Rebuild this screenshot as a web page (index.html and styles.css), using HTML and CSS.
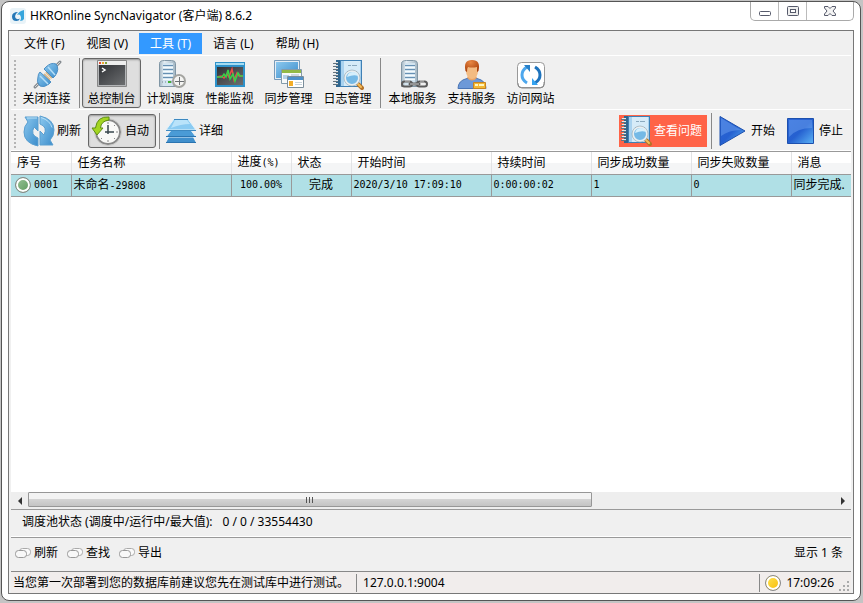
FILE: index.html
```html
<!DOCTYPE html>
<html lang="zh-CN">

<head>
    <meta charset="UTF-8">
    <meta name="viewport" content="width=device-width, initial-scale=1.0">
    <title>HKROnline SyncNavigator</title>
    <link rel="stylesheet" href="styles.css">
</head>

<body>
    <!-- shared gradients and icons -->
    <svg class="defs" width="0" height="0" aria-hidden="true">
        <defs>
            <linearGradient id="blue" x1="0" y1="0" x2="1" y2="1">
                <stop offset="0" stop-color="#8cc8ee" />
                <stop offset="1" stop-color="#3a8ccb" />
            </linearGradient>
            <linearGradient id="deep" x1="0" y1="0" x2="1" y2="1">
                <stop offset="0" stop-color="#2b66d8" />
                <stop offset=".5" stop-color="#2560d0" />
                <stop offset="1" stop-color="#5cb4f6" />
            </linearGradient>
            <linearGradient id="server" x1="0" y1="0" x2="1" y2="0">
                <stop offset="0" stop-color="#a3b6c3" />
                <stop offset=".3" stop-color="#e3edf3" />
                <stop offset="1" stop-color="#a3b6c3" />
            </linearGradient>
            <linearGradient id="dark" x1="0" y1="0" x2="1" y2="1">
                <stop offset="0" stop-color="#303236" />
                <stop offset="1" stop-color="#6c6e70" />
            </linearGradient>
            <radialGradient id="hair" cx=".4" cy=".2" r=".8">
                <stop offset="0" stop-color="#e88743" />
                <stop offset="1" stop-color="#a93f0a" />
            </radialGradient>
        </defs>
        <symbol id="notebook" viewBox="0 0 32 32">
            <path d="M4 1h26v27H4z" fill="#3f80b5" />
            <path d="M4 1h4v27H4z" fill="#2f668f" />
            <path d="M9 2h20v25H9z" fill="#a9d2ef" />
            <path d="M12 2h16v25H12z" fill="#d6ebf8" />
            <path d="M16 6.500h3m1 0h5M15 12.500h10M16 14.500h8" stroke="#8aa9bf" />
            <path d="M1 4.500h5M1 7.500h5M1 10.500h5M1 13.500h5M1 16.500h5M1 19.500h5M1 22.500h5M1 25.500h5" stroke="#65737d" />
            <path d="M2 3.500h4M2 6.500h4M2 9.500h4M2 12.500h4M2 15.500h4M2 18.500h4M2 21.500h4M2 24.500h4" stroke="#e3e9ec" />
            <path d="M26 25l4 4" stroke="#b67328" stroke-width="4" stroke-linecap="round" />
            <path d="M26 25l3 3" stroke="#f3bd59" stroke-width="2" stroke-linecap="round" />
            <circle cx="20" cy="19" r="7" fill="#75b9e6" stroke="#e8eef1" stroke-width="2" />
            <circle cx="20" cy="19" r="8" fill="none" stroke="#8fa2ad" stroke-width=".6" />
            <path d="M15 18q1-5 6-5 4 0 5 4-4-2-11 1z" fill="#d5effc" />
        </symbol>
        <symbol id="tower" viewBox="0 0 32 32">
            <path d="M4.500 27.500v-23q0-3 5-3h7q4 0 4 3v23z" fill="url(#server)" stroke="#8096a5" />
            <path d="M8 4h10v23H8z" fill="#d3e4ef" />
            <path d="M8 6.500h10M8 10.500h10M8 14.500h10M8 18.500h10" stroke="#6690b3" />
            <path d="M8 8.500h10M8 12.500h10M8 16.500h10M8 20.500h10" stroke="#f4fafd" />
        </symbol>
        <symbol id="pill" viewBox="0 0 16 12">
            <rect x="4.500" y="1.500" width="11" height="7" rx="3" fill="#fafafa" stroke="#aaa" />
            <rect x=".5" y="3.500" width="11" height="7" rx="3" fill="#f8f8f8" stroke="#999" />
        </symbol>
    </svg>

    <div class="window">
        <header class="titlebar">
            <svg class="logo" viewBox="0 0 16 16">
                <rect width="16" height="16" rx="3" fill="#e9f3f8" />
                <path d="M8 4Q2 4 2 8.500 2 13 6.500 13 9 13 10 10.500 7 12 5.500 10 4 7 8 4z" fill="#2377b7" />
                <path d="M7 7q2-4 7-5v9q-1 2-4 2 2-3 0-6-1-1-3 0z" fill="#37a5dc" />
            </svg>
            <h1>HKROnline SyncNavigator (客户端) 8.6.2</h1>
            <div class="caption-buttons">
                <button type="button" aria-label="最小化">
                    <svg width="14" height="12" viewBox="0 0 14 12"><rect x="1.500" y="6.500" width="11" height="4" rx="1" fill="#fff" stroke="#565a6b" /></svg>
                </button>
                <button type="button" aria-label="最大化">
                    <svg width="14" height="12" viewBox="0 0 14 12"><rect x="1.500" y="1.500" width="11" height="9" rx="1" fill="#eee" stroke="#565a6b" /><rect x="4.500" y="4.500" width="5" height="3" fill="#fff" stroke="#565a6b" /></svg>
                </button>
                <button type="button" class="close" aria-label="关闭">
                    <svg width="14" height="12" viewBox="0 0 14 12"><path d="M1.500 1.500h3.500l2 2 2-2h3.500v1.500L10 6l2.500 3v1.500H9l-2-2-2 2H1.500V9L4 6 1.500 3z" fill="#f4f4f4" stroke="#565a6b" stroke-linejoin="round" /></svg>
                </button>
            </div>
        </header>

        <main class="client">
            <nav class="menu">
                <button type="button">文件 (F)</button>
                <button type="button">视图 (V)</button>
                <button type="button" class="selected">工具 (T)</button>
                <button type="button">语言 (L)</button>
                <button type="button">帮助 (H)</button>
            </nav>

            <div class="toolbar toolbar-main">
                <span class="grip"></span>
                <button type="button">
                    <svg viewBox="0 0 32 32">
                        <path d="M4 28l7-7M29 3l-6 6" stroke="#858b90" stroke-width="3" stroke-linecap="round" />
                        <path d="M4 28l6-6M29 3l-6 6" stroke="#d5d8da" />
                        <path d="M13 15l6 6M15 13l6 6" stroke="#d9b98a" stroke-width="2" />
                        <path d="M15 8q5-5 10-3 4 5-1 12l-2 2L13 10z" fill="url(#blue)" stroke="#4d8fc4" />
                        <path d="M9 13l11 10-2 2q-5 4-9 2-4-4-2-9 0-3 2-5z" fill="url(#blue)" stroke="#4d8fc4" />
                        <path d="M9 17l8 8M17 8l7 8" stroke="#b5def7" stroke-width="1.500" />
                    </svg>
                    <span>关闭连接</span>
                </button>
                <span class="separator"></span>
                <button type="button" class="pressed">
                    <svg viewBox="0 0 32 32">
                        <path d="M1.500 1.500h29v26h-29z" fill="#b3b5b7" stroke="#888" />
                        <path d="M2 2h28v4H2z" fill="#eee" />
                        <path d="M3 6h26v20H3z" fill="url(#dark)" />
                        <path d="M3 3h2v2H3z" fill="#e45036" />
                        <path d="M6 3h2v2H6z" fill="#efaa2d" />
                        <path d="M9 3h2v2H9z" fill="#83a43b" />
                        <path d="M6 9l3 2-3 2" fill="none" stroke="#fff" stroke-width="1.500" />
                    </svg>
                    <span>总控制台</span>
                </button>
                <button type="button">
                    <svg viewBox="0 0 32 32">
                        <use href="#tower" />
                        <path d="M7 23h10" stroke="#728391" stroke-dasharray="1 2" />
                        <path d="M13 23h3" stroke="#43af35" stroke-width="2" />
                        <circle cx="24" cy="22" r="6" fill="#f4f4f2" stroke="#a4a4a0" stroke-width="2" />
                        <path d="M24.500 18v8M20 22.500h9" stroke="#6b6f72" />
                    </svg>
                    <span>计划调度</span>
                </button>
                <button type="button">
                    <svg viewBox="0 0 32 32">
                        <path d="M1 3h30v25H1z" fill="#2e92ca" />
                        <path d="M2 4h28v2H2z" fill="#a5dcf2" />
                        <path d="M3 8h26v18H3z" fill="url(#dark)" />
                        <path d="M3 18l4-1 3 2 3-4 2 3 3-8 2 11 3-7 2 3h4" fill="none" stroke="#ec4b48" stroke-width="1.500" />
                        <path d="M3 18h5l2-3 2 3 2-7 2 9 3-5 2 7 3-8 2 3h3" fill="none" stroke="#36d348" stroke-width="1.500" />
                    </svg>
                    <span>性能监视</span>
                </button>
                <button type="button">
                    <svg viewBox="0 0 32 32">
                        <path d="M1.500 1.500h25v19h-25z" fill="#e6eef5" stroke="#779ab9" />
                        <path d="M3 3h22v16H3z" fill="url(#blue)" />
                        <path d="M8.500 10.500h20v14h-20z" fill="#f6f9fa" stroke="#839baa" />
                        <path d="M9 11h19v3H9z" fill="#91b946" />
                        <path d="M10 16h6v4h-6z" fill="#b4d1e7" />
                        <path d="M18 16h8M18 18h8" stroke="#a9bac3" />
                        <path d="M14.500 17.500h16v11h-16z" fill="#fff" stroke="#7a8d9a" />
                        <path d="M15 18h15v3H15z" fill="#4d91ca" />
                        <path d="M16 22h4v5h-4z" fill="#f3ad28" />
                        <path d="M22 23.500h7M22 25.500h7" stroke="#c6d2da" />
                    </svg>
                    <span>同步管理</span>
                </button>
                <button type="button">
                    <svg viewBox="0 0 32 32"><use href="#notebook" /></svg>
                    <span>日志管理</span>
                </button>
                <span class="separator"></span>
                <button type="button">
                    <svg viewBox="0 0 32 32">
                        <use href="#tower" />
                        <rect x="5" y="22.500" width="10" height="5" rx="2.500" fill="none" stroke="#5c5c5c" stroke-width="2" />
                        <rect x="20" y="22.500" width="10" height="5" rx="2.500" fill="none" stroke="#5c5c5c" stroke-width="2" />
                        <path d="M13 25h9" stroke="#5c5c5c" stroke-width="3" stroke-linecap="round" />
                        <path d="M13 25h9M8 22h5M23 22h4" stroke="#ccc" />
                    </svg>
                    <span>本地服务</span>
                </button>
                <button type="button">
                    <svg viewBox="0 0 32 32">
                        <path d="M2 29.500q0-8 9-10h10q9 2 9 10z" fill="#6d99d8" stroke="#4a75b5" />
                        <path d="M11 19q5 5 10 0l-2-4h-6z" fill="#e8a367" />
                        <ellipse cx="16" cy="12" rx="6" ry="8" fill="#f3bb82" />
                        <path d="M9.500 12Q7 1 16 1q9 0 6.500 11l-1.500 1V8q-5 1-9 0-1 1-1 5z" fill="url(#hair)" />
                        <path d="M17.500 23.500h12v6h-12z" fill="#f3b935" stroke="#c88420" />
                        <path d="M19 26h3M23 26h5" stroke="#fff6c3" stroke-width="2" />
                    </svg>
                    <span>支持服务</span>
                </button>
                <button type="button">
                    <svg viewBox="0 0 32 32">
                        <rect x="2.500" y="3.500" width="27" height="25" rx="4" fill="#fff" stroke="#999" />
                        <path d="M3 24v1q0 4 4 4h18q4 0 4-4v-2" fill="none" stroke="#888" />
                        <path d="M12 24q-5-3-5-8 0-5 5-8" fill="none" stroke="#4da7ed" stroke-width="3" />
                        <path d="M20 8q5 3 5 8 0 5-5 8" fill="none" stroke="#1e73bd" stroke-width="3" />
                        <path d="M9 6h6v7z" fill="#2780c9" />
                        <path d="M23 26h-6v-7z" fill="#35a2ef" />
                    </svg>
                    <span>访问网站</span>
                </button>
            </div>

            <div class="toolbar toolbar-task">
                <span class="grip"></span>
                <button type="button" class="refresh">
                    <svg viewBox="0 0 32 32">
                        <path d="M2 2h13v14l-4-4q-4 8 4 11v8Q1 28 1 17q0-6 4-10z" fill="url(#blue)" stroke="#5b9fd0" />
                        <path d="M30 30H17V16l4 4q4-8-4-11V1q14 3 14 14 0 6-4 10z" fill="url(#blue)" stroke="#5b9fd0" />
                        <path d="M4 3h10M18 2.500q9 3 11 10" fill="none" stroke="#b9e0f6" />
                    </svg>
                    <span>刷新</span>
                </button>
                <button type="button" class="pressed">
                    <svg viewBox="0 0 32 32">
                        <circle cx="17" cy="17" r="12" fill="#f9f9f7" stroke="#888" stroke-width="2" />
                        <circle cx="17" cy="17" r="13.500" fill="none" stroke="#c9c9c7" />
                        <path d="M17 7v2M17 25v2M25 17h2M24 10l-1 1M10 24l1-1M24 24l-1-1" stroke="#888" />
                        <path d="M17 10v9M14 17h9" stroke="#39474d" stroke-width="1.500" />
                        <path d="M18 2Q6 1 4.500 13H1l5 7 6-7H9.500Q10 6 18 5z" fill="#a4d622" stroke="#5f8e15" />
                    </svg>
                    <span>自动</span>
                </button>
                <span class="separator"></span>
                <button type="button">
                    <svg viewBox="0 0 32 32">
                        <path d="M5 20h22l4 8H1z" fill="#3f8fcc" />
                        <path d="M1 27.500h30" stroke="#2a74b0" />
                        <path d="M7 14h18l6 8H1z" fill="#4a9bd6" stroke="#e3f2fb" />
                        <path d="M1 21.500h30" stroke="#2a74b0" />
                        <path d="M9 4h14l8 11H1z" fill="#8acbf2" stroke="#e3f2fb" />
                        <path d="M9 4.500h14M1 15.500h30" stroke="#3d88c0" />
                        <path d="M10 5h12l3 4q-9 0-19 4z" fill="#b9e3fa" />
                    </svg>
                    <span>详细</span>
                </button>
                <span class="spacer"></span>
                <button type="button" class="problem">
                    <svg viewBox="0 0 32 32"><use href="#notebook" /></svg>
                    <span>查看问题</span>
                </button>
                <span class="separator"></span>
                <button type="button" class="run">
                    <svg viewBox="0 0 32 32">
                        <path d="M3 1.500l25 14.500L3 30.500z" fill="url(#deep)" stroke="#1d50ae" />
                        <path d="M4 3l20 12Q12 15 4 21z" fill="#6ca0ed" opacity=".5" />
                    </svg>
                    <span>开始</span>
                </button>
                <button type="button" class="run">
                    <svg viewBox="0 0 32 32">
                        <path d="M2.500 3.500h26v25h-26z" fill="url(#deep)" stroke="#1d50ae" />
                        <path d="M4 5h23v8Q12 13 4 22z" fill="#6ca0ed" opacity=".5" />
                    </svg>
                    <span>停止</span>
                </button>
            </div>

            <section class="tasks">
                <table>
                    <colgroup>
                        <col class="col-small">
                        <col class="col-name">
                        <col class="col-small">
                        <col class="col-small">
                        <col class="col-start">
                        <col class="col-count">
                        <col class="col-count">
                        <col class="col-count">
                        <col>
                    </colgroup>
                    <thead>
                        <tr>
                            <th>序号</th>
                            <th>任务名称</th>
                            <th>进度<span class="mono">(%)</span></th>
                            <th>状态</th>
                            <th>开始时间</th>
                            <th>持续时间</th>
                            <th>同步成功数量</th>
                            <th>同步失败数量</th>
                            <th>消息</th>
                        </tr>
                    </thead>
                    <tbody>
                        <tr>
                            <td class="mono"><div class="number"><i class="lamp lamp-green"></i>0001</div></td>
                            <td>未命名<span class="mono">-29808</span></td>
                            <td class="mono center">100.00%</td>
                            <td class="center">完成</td>
                            <td class="mono">2020/3/10 17:09:10</td>
                            <td class="mono">0:00:00:02</td>
                            <td class="mono">1</td>
                            <td class="mono">0</td>
                            <td>同步完成.</td>
                        </tr>
                    </tbody>
                </table>
            </section>

            <div class="scrollbar">
                <button type="button" aria-label="向左"><svg width="4" height="8" viewBox="0 0 4 8"><path d="M4 0v8L0 4z" fill="#333" /></svg></button>
                <div class="track">
                    <div class="thumb"><i></i><i></i><i></i></div>
                </div>
                <button type="button" aria-label="向右"><svg width="4" height="8" viewBox="0 0 4 8"><path d="M0 0v8l4-4z" fill="#333" /></svg></button>
            </div>

            <div class="pool">
                <span>调度池状态 (调度中/运行中/最大值):</span>
                <span>0 / 0 / 33554430</span>
            </div>

            <div class="actions">
                <button type="button"><svg><use href="#pill" /></svg>刷新</button>
                <button type="button"><svg><use href="#pill" /></svg>查找</button>
                <button type="button"><svg><use href="#pill" /></svg>导出</button>
                <span class="count">显示 1 条</span>
            </div>

            <footer class="statusbar">
                <span class="tip">当您第一次部署到您的数据库前建议您先在测试库中进行测试。</span>
                <span class="address">127.0.0.1:9004</span>
                <span class="clock"><i class="lamp lamp-yellow"></i>17:09:26</span>
                <svg class="resize" viewBox="0 0 12 12"><path d="M8 0h2v2H8zM4 4h2v2H4zM8 4h2v2H8zM0 8h2v2H0zM4 8h2v2H4zM8 8h2v2H8z" fill="#aaa" /></svg>
            </footer>
        </main>
    </div>
</body>

</html>
```
FILE: styles.css
```css
* {
    box-sizing: border-box;
}

body {
    margin: 0;
    height: 100vh;
    padding: 1px 2px 2px 1px;
    background: #c4c4c4;
    color: #000;
    font: 12px/16px "Noto Sans", "Noto Sans CJK SC", sans-serif;
}

button {
    padding: 0;
    border: 0;
    background: none;
    color: inherit;
    font: inherit;
    white-space: nowrap;
}

svg {
    display: block;
    flex: none;
}

.defs {
    position: absolute;
}

.window {
    display: flex;
    flex-direction: column;
    height: 100%;
    padding: 0 6px 6px;
    border: 1px solid #555;
    border-radius: 8px;
    background: #fff;
}

/* title bar */
.titlebar {
    display: flex;
    flex: none;
    height: 28px;
}

.logo {
    width: 16px;
    height: 16px;
    margin: 6px 4px 0 2px;
}

.titlebar h1 {
    flex: 1;
    margin: 6px 0 0;
    font-size: 12px;
    font-weight: normal;
}

.caption-buttons {
    display: flex;
    height: 19px;
    border: 1px solid #aaa;
    border-top: 0;
    border-radius: 0 0 5px 5px;
}

.caption-buttons button {
    display: flex;
    align-items: center;
    justify-content: center;
    width: 28px;
    border-right: 1px solid #bbb;
}

.caption-buttons .close {
    width: 46px;
    border-right: 0;
}

.client {
    display: flex;
    flex: 1;
    flex-direction: column;
    min-height: 0;
    padding: 0 2px;
    border: 1px solid #777;
    background: #f0f0f0;
}

/* menu */
.menu {
    display: flex;
    height: 25px;
    padding: 2px 0 1px 2px;
    border-bottom: 1px solid #fff;
}

.menu button {
    padding: 0 11px;
}

.menu .selected {
    background: #3399ff;
    color: #fff;
}

/* toolbars */
.toolbar {
    display: flex;
    align-items: center;
    border-bottom: 1px solid #fff;
}

.toolbar button {
    display: flex;
    align-items: center;
    border: 1px solid transparent;
    border-radius: 3px;
}

.toolbar .pressed {
    border-color: #666;
    background: #dedede;
    box-shadow: inset 0 1px 2px #999;
}

.toolbar svg {
    width: 32px;
    height: 32px;
}

.grip {
    width: 2px;
    height: 46px;
    margin: 0 1px 0 3px;
    background: repeating-linear-gradient(#b4b4b4 0 2px, transparent 2px 4px);
}

.separator {
    width: 1px;
    margin: 0 2px 0 3px;
    background: #888;
}

.toolbar-main {
    height: 54px;
}

.toolbar-main button {
    flex-direction: column;
    width: 59px;
    height: 50px;
}

.toolbar-main .separator {
    height: 50px;
}

.toolbar-task {
    height: 41px;
    padding: 2px 1px 0 0;
}

.toolbar-task button {
    gap: 2px;
    height: 34px;
    padding: 0 6px 0 2px;
}

.toolbar-task .grip {
    height: 34px;
}

.toolbar-task .separator {
    height: 36px;
}

.toolbar-task .refresh {
    margin-left: 3px;
}

.toolbar-task .problem {
    height: 32px;
    margin-right: 1px;
    padding: 0 5px 0 1px;
    border: 0;
    border-radius: 0;
    background: #ff6347;
    color: #fff;
}

.spacer {
    flex: 1;
}

/* task list */
.tasks {
    flex: 1;
    min-height: 0;
    overflow: hidden;
    border-top: 1px solid #999;
    background: #fff;
}

table {
    width: 100%;
    border-collapse: collapse;
    table-layout: fixed;
}

.col-small {
    width: 60px;
}

.col-name {
    width: 160px;
}

.col-start {
    width: 140px;
}

.col-count {
    width: 100px;
}

th {
    height: 22px;
    padding: 0 6px;
    border-right: 1px solid #e2e3e5;
    border-bottom: 1px solid #999;
    background: linear-gradient(#fff 50%, #f4f5f6 50%);
    font-weight: normal;
    text-align: left;
    white-space: nowrap;
}

td {
    height: 22px;
    padding: 0 2px;
    border: 1px solid #999;
    border-left: 0;
    background: #b0e0e6;
    white-space: nowrap;
}

th:last-child,
td:last-child {
    border-right: 0;
}

.mono {
    font-family: "DejaVu Sans Mono", monospace;
    font-size: 10px;
}

.center {
    text-align: center;
}

.number {
    display: flex;
    align-items: center;
    gap: 3px;
    padding-left: 2px;
}

.lamp {
    width: 16px;
    height: 16px;
    border: 1px solid #888;
    border-radius: 50%;
    box-shadow: inset 0 0 0 2px #fff;
}

.lamp-green {
    background: linear-gradient(135deg, #9bc59b, #5a985a);
}

.lamp-yellow {
    background: linear-gradient(135deg, #ffe558, #f8bb00);
}

/* scrollbar */
.scrollbar {
    display: flex;
    height: 17px;
    background: #eee;
}

.scrollbar button {
    display: flex;
    align-items: center;
    justify-content: center;
    width: 17px;
}

.track {
    flex: 1;
}

.thumb {
    display: flex;
    align-items: center;
    justify-content: center;
    gap: 1px;
    width: 70%;
    height: 15px;
    border: 1px solid #979797;
    border-radius: 1px;
    background: linear-gradient(#f3f3f3 50%, #d3d3d3 50%, #c4c4c4);
}

.thumb i {
    width: 2px;
    height: 6px;
    border-left: 1px solid #555;
}

/* bottom bars */
.pool {
    display: flex;
    align-items: center;
    gap: 10px;
    height: 28px;
    padding: 0 11px 3px;
    border-top: 1px solid #999;
    border-bottom: 1px solid #fff;
}

.actions {
    display: flex;
    align-items: center;
    gap: 9px;
    height: 34px;
    padding: 0 8px 3px 4px;
    border-top: 1px solid #999;
}

.actions button {
    display: flex;
    align-items: center;
    gap: 3px;
}

.actions svg {
    width: 16px;
    height: 12px;
}

.count {
    margin-left: auto;
}

.statusbar {
    display: flex;
    align-items: center;
    height: 22px;
    border-top: 1px solid #888;
    background: #f1edec;
}

.tip {
    padding: 0 7px 0 2px;
    white-space: nowrap;
}

.address {
    flex: 1;
    padding: 1px 6px;
    border-left: 1px solid #888;
    border-right: 1px solid #888;
}

.clock {
    display: flex;
    align-items: center;
    gap: 5px;
    padding-left: 5px;
}

.resize {
    width: 12px;
    height: 12px;
    margin-left: 5px;
    align-self: flex-end;
}
```
